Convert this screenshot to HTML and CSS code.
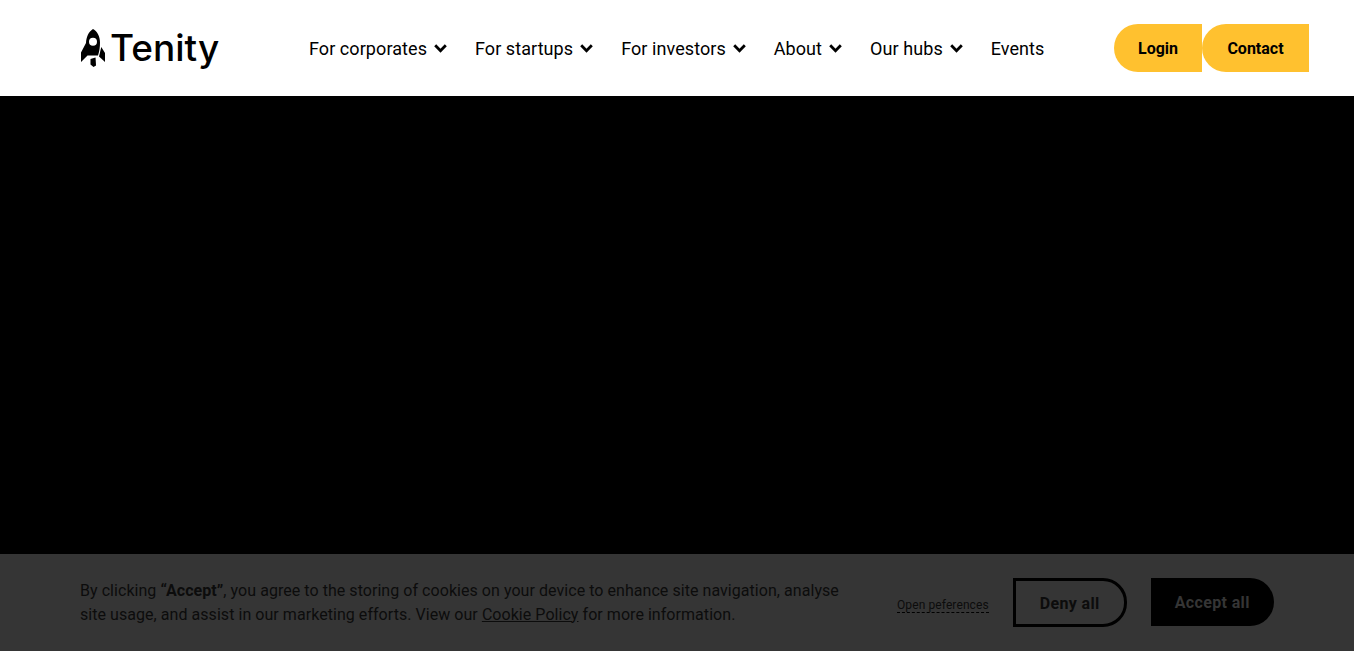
FILE: index.html
```html
<!DOCTYPE html>
<html lang="en">
<head>
<meta charset="utf-8">
<title>Tenity</title>
<link rel="stylesheet" href="styles.css">
</head>
<body>
<div class="page">
  <header class="header">
    <a class="logo" href="#">
      <svg class="logo-mark" width="24" height="38" viewBox="0 0 24 38" aria-hidden="true">
        <path fill-rule="evenodd" d="M12 0C16.500 2.500 19 7.500 19 13.500C19 18 18.500 22 17 26.500H6.500L0 33V23.500L5 14C5.300 8 7.500 2.800 12 0ZM12 8.800A4 4 0 1 0 12 16.800A4 4 0 1 0 12 8.800Z"/>
        <path d="M20.300 18L24 24V33L18 27.500Z"/>
        <path d="M9.500 30L14.500 28.500L15 36.500L12.500 38L9.500 35.500Z"/>
      </svg>
      <span class="logo-word">Tenity</span>
    </a>
    <nav class="nav">
      <a class="nav-item" href="#">For corporates<svg class="chev" viewBox="0 0 13 9"><path d="M1.200 1.300L6.500 6.800L11.800 1.300"/></svg></a>
      <a class="nav-item" href="#">For startups<svg class="chev" viewBox="0 0 13 9"><path d="M1.200 1.300L6.500 6.800L11.800 1.300"/></svg></a>
      <a class="nav-item" href="#">For investors<svg class="chev" viewBox="0 0 13 9"><path d="M1.200 1.300L6.500 6.800L11.800 1.300"/></svg></a>
      <a class="nav-item" href="#">About<svg class="chev" viewBox="0 0 13 9"><path d="M1.200 1.300L6.500 6.800L11.800 1.300"/></svg></a>
      <a class="nav-item" href="#">Our hubs<svg class="chev" viewBox="0 0 13 9"><path d="M1.200 1.300L6.500 6.800L11.800 1.300"/></svg></a>
      <a class="nav-item" href="#">Events</a>
    </nav>
    <div class="actions">
      <a class="pill login" href="#">Login</a>
      <a class="pill contact" href="#">Contact</a>
    </div>
  </header>
  <main class="hero"></main>
  <section class="cookie">
    <p class="cookie-text">By clicking <strong>“Accept”</strong>, you agree to the storing of cookies on your device to enhance site navigation, analyse site usage, and assist in our marketing efforts. View our <a href="#">Cookie Policy</a> for more information.</p>
    <div class="cookie-actions">
      <a class="prefs" href="#">Open peferences</a>
      <a class="btn deny" href="#">Deny all</a>
      <a class="btn accept" href="#">Accept all</a>
    </div>
  </section>
</div>
</body>
</html>
```

FILE: styles.css
```css
* { box-sizing: border-box; }
html, body { margin: 0; height: 100%; background: #fff; overflow: hidden; }
body { font-family: "Roboto", "Liberation Sans", sans-serif; color: #000; }
a { color: inherit; text-decoration: none; }
.page { width: 1354px; height: 651px; display: flex; flex-direction: column; }
.header { height: 96px; display: flex; align-items: center; padding: 0 45px 0 81px; flex: none; }
.logo { display: flex; align-items: center; gap: 5px; width: 228px; }
.logo-mark { display: block; margin-top: -1px; }
.logo-word { font-family: "Inter", sans-serif; font-size: 37px; font-weight: 500; line-height: 40px; }
.nav { display: flex; gap: 28px; flex: 1; font-size: 18px; letter-spacing: .07px; }
.nav-item { display: flex; align-items: center; gap: 7px; white-space: nowrap; }
.chev { width: 13px; height: 9px; fill: none; stroke: #000; stroke-width: 2.800; }
.actions { display: flex; }
.pill { height: 48px; display: flex; align-items: center; justify-content: center; background: #ffc12f; border-radius: 24px 0 0 24px; font-size: 16px; font-weight: 700; }
.login { width: 88px; }
.contact { width: 107px; }
.hero { flex: 1; background: #000; }
.cookie { height: 97px; flex: none; background: #353535; color: #0c0c0c; display: flex; align-items: center; padding: 0 80px 2px; }
.cookie-text { margin: 2px 0 0; width: 780px; font-size: 16px; line-height: 24px; letter-spacing: .05px; }
.cookie-text a { text-decoration: underline; }
.cookie-actions { display: flex; align-items: center; margin-left: 37px; }
.prefs { font-size: 12px; letter-spacing: .1px; border-bottom: 1px dashed #000; margin-right: 24px; margin-top: 7px; }
.btn { height: 48px; padding-top: 2px; display: flex; align-items: center; justify-content: center; border-radius: 0 24px 24px 0; font-size: 16px; font-weight: 700; letter-spacing: .35px; }
.deny { width: 114px; height: 49px; margin-bottom: -1px; border: 3px solid #000; margin-right: 24px; }
.accept { width: 123px; background: #000; color: #353535; }
```
